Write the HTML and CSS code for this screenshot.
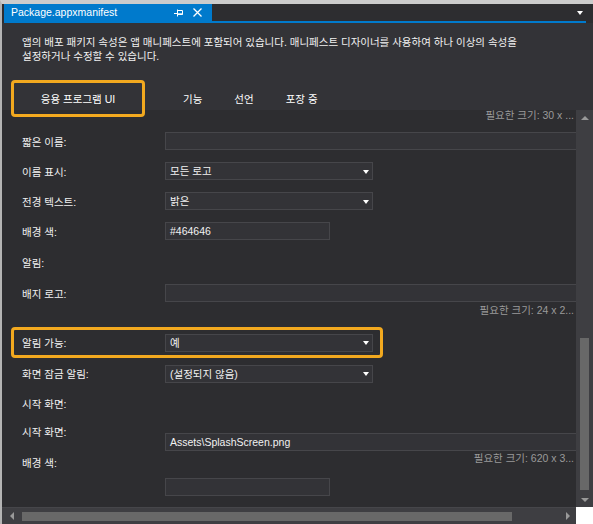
FILE: index.html
```html
<!DOCTYPE html>
<html lang="ko">
<head>
<meta charset="utf-8">
<title>Package.appxmanifest</title>
<link rel="stylesheet" href="styles.css">
</head>
<body>
<div class="window">
  <div class="titlebar">
    <div class="doc-tab">
      <span class="doc-title">Package.appxmanifest</span>
      <svg class="pin" width="9" height="8" viewBox="0 0 9 8"><path d="M0 4.5h3.5M3.5 0.5v7M3.5 1.5h5v4h-5" stroke="#fff" stroke-width="1" fill="none"/><path d="M3.5 5h5" stroke="#fff" stroke-width="1.4"/></svg>
      <svg class="close" width="9" height="9" viewBox="0 0 9 9"><path d="M0.5 0.5l8 8M8.5 0.5l-8 8" stroke="#fff" stroke-width="1.3" fill="none"/></svg>
    </div>
    <div class="title-fill"></div>
    <span class="menu-arrow"></span>
  </div>
  <div class="tabline"></div>
  <div class="header">
    <p class="desc">앱의 배포 패키지 속성은 앱 매니페스트에 포함되어 있습니다. 매니페스트 디자이너를 사용하여 하나 이상의 속성을<br>설정하거나 수정할 수 있습니다.</p>
    <nav class="tabs">
      <span class="tab tab-active">응용 프로그램 UI</span>
      <span class="tab tab-first">기능</span>
      <span class="tab">선언</span>
      <span class="tab">포장 중</span>
    </nav>
  </div>
  <div class="body">
    <div class="form">
      <div class="hint hint-top">필요한 크기: 30 x ...</div>
      <div class="row">
        <span class="label">짧은 이름:</span>
        <span class="field field-wide"></span>
      </div>
      <div class="row">
        <span class="label">이름 표시:</span>
        <span class="field field-select">모든 로고<i class="caret"></i></span>
      </div>
      <div class="row">
        <span class="label">전경 텍스트:</span>
        <span class="field field-select">밝은<i class="caret"></i></span>
      </div>
      <div class="row">
        <span class="label">배경 색:</span>
        <span class="field field-short">#464646</span>
      </div>
      <div class="row row-tall">
        <span class="label">알림:</span>
      </div>
      <div class="row">
        <span class="label">배지 로고:</span>
        <span class="field field-wide"></span>
      </div>
      <div class="hint hint-mid">필요한 크기: 24 x 2...</div>
      <div class="row row-highlight">
        <span class="label">알림 가능:</span>
        <span class="field field-select">예<i class="caret"></i></span>
      </div>
      <div class="row row-31">
        <span class="label">화면 잠금 알림:</span>
        <span class="field field-select">(설정되지 않음)<i class="caret"></i></span>
      </div>
      <div class="row row-29">
        <span class="label">시작 화면:</span>
      </div>
      <div class="row row-top row-splash">
        <span class="label">시작 화면:</span>
        <span class="field field-wide">Assets\SplashScreen.png</span>
      </div>
      <div class="hint hint-low">필요한 크기: 620 x 3...</div>
      <div class="row row-top row-bg">
        <span class="label">배경 색:</span>
        <span class="field field-short"></span>
      </div>
    </div>
    <div class="vscroll">
      <i class="arrow arrow-up"></i>
      <div class="vthumb"></div>
      <i class="arrow arrow-down"></i>
    </div>
  </div>
  <div class="hbar">
    <div class="htrack">
      <i class="arrow arrow-left"></i>
      <div class="hthumb"></div>
      <i class="arrow arrow-right"></i>
    </div>
    <div class="corner"></div>
  </div>
</div>
</body>
</html>
```

FILE: styles.css
```css
html, body {
  margin: 0;
  padding: 0;
}
body {
  width: 593px;
  height: 524px;
  overflow: hidden;
  background: #2d2d30;
  font-family: "Liberation Sans", "Noto Sans CJK KR", sans-serif;
  font-size: 10.5px;
  color: #f1f1f1;
}
.window {
  width: 593px;
  height: 524px;
  box-sizing: border-box;
  border-top: 4px solid #cccccc;
  border-left: 2px solid #b4b4b4;
  display: flex;
  flex-direction: column;
  background: #2d2d30;
}
.titlebar {
  height: 17px;
  display: flex;
  align-items: center;
  padding-left: 2px;
  flex: none;
}
.doc-tab {
  width: 208px;
  height: 17px;
  background: #007acc;
  display: flex;
  align-items: center;
  padding-left: 7px;
  box-sizing: border-box;
  color: #ffffff;
  font-size: 10.5px;
}
.doc-title {
  flex: 1;
  line-height: 17px;
}
.pin {
  margin-right: 10px;
  display: block;
}
.close {
  margin-right: 10px;
  display: block;
}
.title-fill {
  flex: 1;
}
.menu-arrow {
  width: 0;
  height: 0;
  border-left: 3.5px solid transparent;
  border-right: 3.5px solid transparent;
  border-top: 4px solid #ffffff;
  margin-right: 10px;
  margin-top: 1px;
}
.tabline {
  height: 2px;
  background: #007acc;
  margin: 0 7px 0 2px;
  flex: none;
}
.header {
  height: 87px;
  background: #333337;
  flex: none;
}
.desc {
  margin: 0;
  padding: 12px 0 0 20px;
  line-height: 14px;
  white-space: nowrap;
}
.tabs {
  display: flex;
  padding-top: 29px;
  line-height: 14px;
}
.tab {
  padding: 0 16px;
  color: #ffffff;
}
.tab-active {
  position: relative;
  width: 134px;
  margin-left: 9px;
  padding: 0;
  text-align: center;
}
.tab-active::after {
  content: "";
  position: absolute;
  left: 0;
  right: 0;
  top: -12px;
  bottom: -11px;
  border: 3px solid #f2a91f;
  border-radius: 4px;
}
.tab-first {
  margin-left: 22px;
}
.body {
  height: 397px;
  display: flex;
  flex: none;
}
.form {
  width: 574px;
  overflow: hidden;
  background: #2d2d30;
  flex: none;
}
.hint {
  color: #9a9a9a;
  text-align: right;
  line-height: 12px;
  height: 12px;
  padding-right: 2px;
  white-space: nowrap;
}
.hint-top {
  margin-top: -1px;
  margin-bottom: 5px;
}
.hint-mid {
  margin-top: -4px;
  margin-bottom: 11px;
}
.hint-low {
  margin-top: -2px;
  margin-bottom: -12px;
}
.row {
  display: flex;
  align-items: center;
  height: 30px;
}
.row-tall {
  height: 32px;
}
.row-31 {
  height: 31px;
}
.row-29 {
  height: 29px;
}
.row-highlight {
  height: 31px;
  position: relative;
}
.row-highlight::after {
  content: "";
  position: absolute;
  left: 9px;
  width: 372px;
  top: 0;
  bottom: 0;
  box-sizing: border-box;
  border: 3px solid #f2a91f;
  border-radius: 4px;
}
.row-top {
  align-items: flex-start;
}
.row-splash {
  height: 36px;
}
.row-splash .label {
  margin-top: 7px;
  line-height: 14px;
}
.row-splash .field {
  margin-top: 15px;
}
.row-bg .label {
  margin-top: 4px;
  line-height: 14px;
}
.row-bg .field {
  margin-top: 26px;
}
.label {
  width: 163px;
  padding-left: 20px;
  box-sizing: border-box;
  flex: none;
  white-space: nowrap;
}
.field {
  height: 18px;
  box-sizing: border-box;
  border: 1px solid #46464a;
  background: #333337;
  color: #f1f1f1;
  padding-left: 4px;
  line-height: 16px;
  flex: none;
  white-space: nowrap;
}
.field-wide {
  width: 440px;
}
.field-short {
  width: 165px;
}
.field-select {
  width: 208px;
  display: flex;
  align-items: center;
  justify-content: space-between;
  padding-right: 3px;
}
.caret {
  width: 0;
  height: 0;
  border-left: 3.5px solid transparent;
  border-right: 3.5px solid transparent;
  border-top: 4px solid #ffffff;
  margin-top: 1px;
}
.vscroll {
  width: 17px;
  background: #3e3e42;
  display: flex;
  flex-direction: column;
  align-items: center;
  flex: none;
}
.arrow {
  width: 0;
  height: 0;
  display: block;
}
.arrow-up {
  margin-top: 6px;
  border-left: 4px solid transparent;
  border-right: 4px solid transparent;
  border-bottom: 4px solid #999999;
}
.vthumb {
  width: 9px;
  height: 152px;
  margin-top: 218px;
  background: #686868;
}
.arrow-down {
  margin-top: 8px;
  border-left: 4px solid transparent;
  border-right: 4px solid transparent;
  border-top: 4px solid #999999;
}
.hbar {
  height: 17px;
  display: flex;
  flex: none;
}
.htrack {
  flex: 1;
  background: #3e3e42;
  display: flex;
  align-items: center;
  border-top: 1px solid #46464a;
  box-sizing: border-box;
}
.arrow-left {
  margin-left: 8px;
  border-top: 4px solid transparent;
  border-bottom: 4px solid transparent;
  border-right: 4px solid #999999;
}
.hthumb {
  width: 490px;
  height: 9px;
  margin-left: 8px;
  background: #686868;
}
.arrow-right {
  margin-left: 54px;
  border-top: 4px solid transparent;
  border-bottom: 4px solid transparent;
  border-left: 4px solid #999999;
}
.corner {
  width: 17px;
  height: 17px;
  background: #ffffff;
  flex: none;
}
```
